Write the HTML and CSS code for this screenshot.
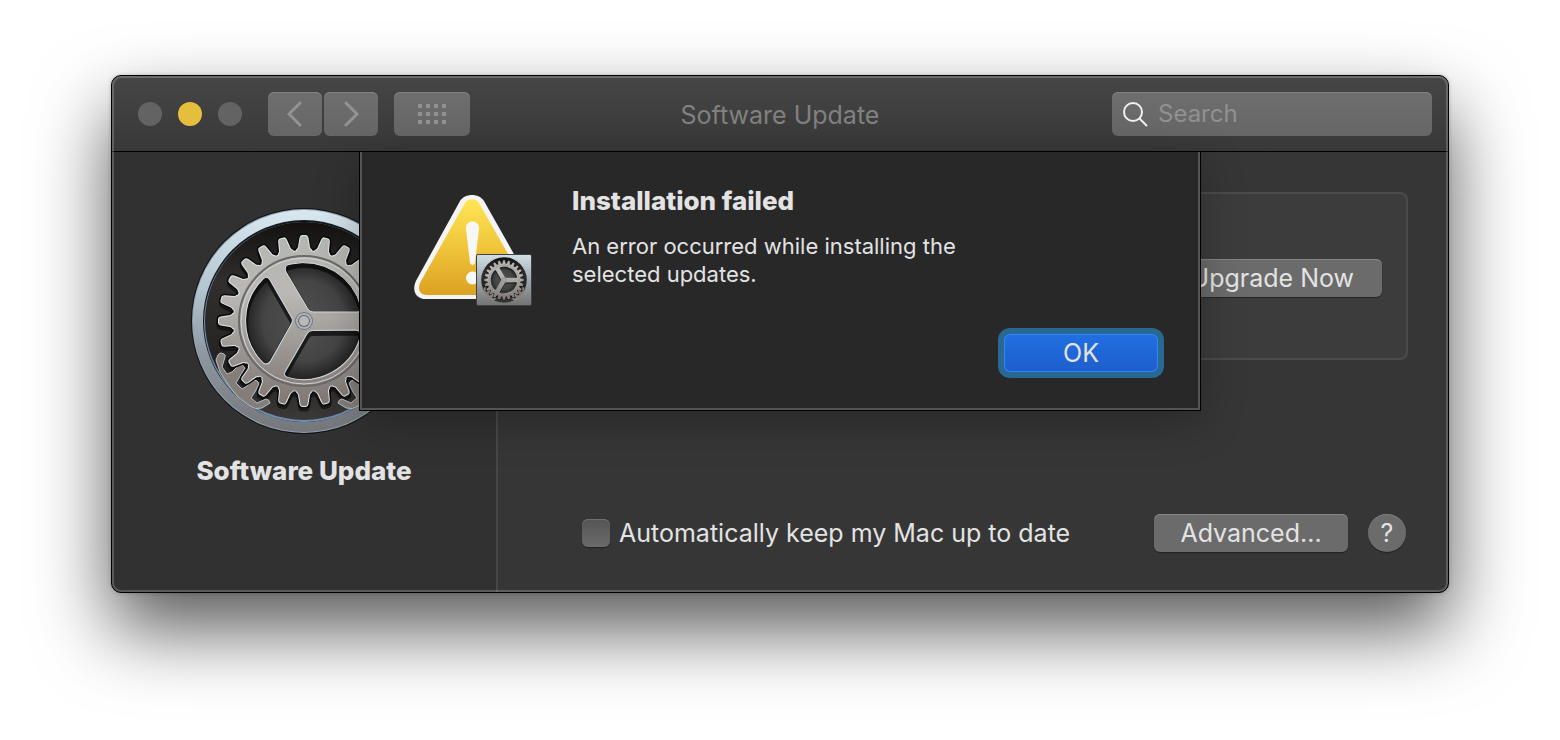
FILE: index.html
```html
<!DOCTYPE html>
<html lang="en">
<head>
<meta charset="utf-8">
<title>Software Update</title>
<link rel="stylesheet" href="styles.css">
</head>
<body>
<svg class="defs" aria-hidden="true">
  <defs>
    <linearGradient id="ringFill" x1="0" y1="0" x2="0" y2="1">
      <stop offset="0" stop-color="#d9e8f0"/><stop offset=".35" stop-color="#b4c6d2"/><stop offset=".65" stop-color="#8e979f"/><stop offset="1" stop-color="#74767a"/>
    </linearGradient>
    <linearGradient id="metal" x1="0" y1="0" x2="0" y2="1">
      <stop offset="0" stop-color="#b3b6b0"/><stop offset=".35" stop-color="#bab8b3"/><stop offset=".65" stop-color="#9c9793"/><stop offset="1" stop-color="#7b736e"/>
    </linearGradient>
    <linearGradient id="edge" gradientUnits="userSpaceOnUse" x1="0" y1="-100" x2="0" y2="100">
      <stop offset="0" stop-color="#e6ece8"/><stop offset=".6" stop-color="#c5d3df"/><stop offset="1" stop-color="#9fb4ca"/>
    </linearGradient>
    <linearGradient id="well" x1="0" y1="0" x2="0" y2="1">
      <stop offset="0" stop-color="#121110"/><stop offset=".3" stop-color="#302f2e"/><stop offset=".75" stop-color="#242221"/><stop offset="1" stop-color="#3c3a38"/>
    </linearGradient>
    <radialGradient id="hollow">
      <stop offset="0" stop-color="#505050"/><stop offset=".65" stop-color="#454545"/><stop offset="1" stop-color="#1b1b1b"/>
    </radialGradient>
    <linearGradient id="warn" x1="0" y1="0" x2="0" y2="1">
      <stop offset="0" stop-color="#ffe654"/><stop offset=".5" stop-color="#efc53a"/><stop offset="1" stop-color="#dca122"/>
    </linearGradient>
    <path id="tooth" d="M-8 -66 L-7 -71 Q-5.500 -72 -5 -74 L-3.500 -83 Q-3 -85 -2 -85 L2 -85 Q3 -85 3.500 -83 L5 -74 Q5.500 -72 7 -71 L8 -66 Z"/>
    <g id="teeth6">
      <use href="#tooth"/><use href="#tooth" transform="rotate(15)"/><use href="#tooth" transform="rotate(30)"/>
      <use href="#tooth" transform="rotate(45)"/><use href="#tooth" transform="rotate(60)"/><use href="#tooth" transform="rotate(75)"/>
    </g>
    <g id="gear">
      <use href="#teeth6"/><use href="#teeth6" transform="rotate(90)"/><use href="#teeth6" transform="rotate(180)"/><use href="#teeth6" transform="rotate(270)"/>
      <circle r="70"/>
    </g>
    <path id="hole" d="M9 -9 L53 -9 Q58 -9 57 -14 A59 59 0 0 0 -13 -57 Q-21 -56 -18 -49 L4 -12 Q6 -9 9 -9 Z"/>
    <g id="holes">
      <use href="#hole"/><use href="#hole" transform="rotate(120)"/><use href="#hole" transform="rotate(240)"/>
    </g>
    <path id="catch" d="M-88 39 L-86 34 Q-85 32 -83 32 L-80 33 Q-78 34 -79 36 L-82 46 L-77 53 L-72 51 L-65 44 Q-61 43 -59 47 L-65 57 L-68 62 L-62 68 L-57 65 L-50 59 Q-46 59 -45 63 L-49 71 L-53 77 L-47 82 L-38 78 Q-35 78 -34 82 L-42 87 Q-49 89 -54 85 L-66 76 Q-75 66 -84 51 Z"/>
    <mask id="gearMask" maskUnits="userSpaceOnUse" x="-100" y="-100" width="200" height="200">
      <use href="#gear" fill="#fff"/><use href="#holes" fill="#000"/>
    </mask>
    <symbol id="wheel" viewBox="-100 -100 200 200" overflow="visible">
      <circle r="99" fill="url(#well)"/>
      <use href="#gear" fill="#0c0b0b" stroke="#0c0b0b" stroke-width="5" opacity=".65" transform="translate(0 3)"/>
      <g fill="#857d77" stroke="#b4bdc5" stroke-width="1">
        <use href="#catch"/><use href="#catch" transform="scale(-1 1)"/>
      </g>
      <use href="#gear" fill="none" stroke="#0c0b0b" stroke-width="5"/>
      <use href="#gear" fill="none" stroke="url(#edge)" stroke-width="2"/>
      <circle r="62" fill="url(#hollow)"/>
      <use href="#holes" fill="none" stroke="#080808" stroke-width="5" opacity=".7" transform="translate(0 3)"/>
      <g mask="url(#gearMask)">
        <rect x="-90" y="-90" width="180" height="180" fill="url(#metal)"/>
        <circle r="65" fill="none" stroke="#6b6a68" stroke-width="2"/>
        <circle r="63" fill="none" stroke="#d3d5d3" stroke-width="1"/>
      </g>
      <use href="#holes" fill="none" stroke="url(#edge)" stroke-width="1"/>
      <circle r="9" fill="#77767a"/><circle r="8" fill="#a8b4bf"/>
      <circle r="6" fill="#63666b"/><circle r="5" fill="#bbb9b6"/>
    </symbol>
  </defs>
</svg>

<main class="window">
  <header class="toolbar">
    <div class="lights">
      <button class="light" aria-label="Close"></button>
      <button class="light light-min" aria-label="Minimize"></button>
      <button class="light" aria-label="Zoom"></button>
    </div>
    <nav class="history">
      <button class="tool" aria-label="Back"><svg width="16" height="26" viewBox="0 0 16 26"><path d="M13 2 L2 13 L13 24"/></svg></button>
      <button class="tool" aria-label="Forward"><svg width="16" height="26" viewBox="0 0 16 26"><path d="M3 2 L14 13 L3 24"/></svg></button>
    </nav>
    <button class="tool tool-grid" aria-label="Show all">
      <svg width="28" height="20" viewBox="0 0 28 20"><path class="dots" d="M0 0h4v4H0zM8 0h4v4H8zM16 0h4v4h-4zM24 0h4v4h-4zM0 8h4v4H0zM8 8h4v4H8zM16 8h4v4h-4zM24 8h4v4h-4zM0 16h4v4H0zM8 16h4v4H8zM16 16h4v4h-4zM24 16h4v4h-4z"/></svg>
    </button>
    <h1 class="title">Software Update</h1>
    <label class="search">
      <svg width="26" height="26" viewBox="0 0 26 26" aria-hidden="true"><circle cx="10" cy="11" r="9"/><path d="M16.500 17.500 L24 25"/></svg>
      <input type="search" placeholder="Search" aria-label="Search">
    </label>
  </header>

  <div class="content">
    <aside class="sidebar">
      <svg class="app-icon" viewBox="-113 -113 226 226" role="img" aria-label="Software Update">
        <circle r="113" fill="#111"/>
        <circle r="112" fill="#8fa2b1"/>
        <circle r="111" fill="url(#ringFill)"/>
        <circle r="101" fill="#15181b"/>
        <circle r="100" cy="1" fill="#6f8db0"/>
        <use href="#wheel" x="-100" y="-100" width="200" height="200"/>
      </svg>
      <h2 class="app-name">Software Update</h2>
    </aside>

    <section class="pane">
      <div class="group">
        <button class="push">Upgrade Now</button>
      </div>
      <div class="options">
        <label class="auto"><input type="checkbox" class="check">Automatically keep my Mac up to date</label>
        <button class="push push-wide">Advanced...</button>
        <button class="help" aria-label="Help">?</button>
      </div>
    </section>

    <div class="sheet" role="alertdialog" aria-labelledby="alert-title" aria-describedby="alert-text">
      <svg class="alert-icon" width="120" height="112" viewBox="0 0 120 112" aria-hidden="true">
        <defs>
          <linearGradient id="plate" x1="0" y1="0" x2="0" y2="1"><stop offset="0" stop-color="#cfdfe6"/><stop offset=".5" stop-color="#a0a8ad"/><stop offset="1" stop-color="#747474"/></linearGradient>
        </defs>
        <path d="M46 6 C51 -2 65 -2 70 6 L114 84 Q122 104 104 104 L12 104 C1 104 -3 94 3 84 Z" fill="#f4f4f4"/>
        <path d="M51 8 C54 3 62 3 65 8 L110 87 Q115 100 104 100 L13 100 C5 100 3 93 7 86 Z" fill="url(#warn)"/>
        <path d="M52 34 C51 24 66 24 65 34 L61 68 Q58.500 72 56 68 Z" fill="#f7f7f7"/>
        <circle cx="58.500" cy="83" r="6.500" fill="#f7f7f7"/>
        <rect x="62" y="59" width="56" height="52" rx="2" fill="#3d4143"/>
        <rect x="63" y="60" width="54" height="50" rx="1" fill="url(#plate)"/>
        <use href="#wheel" x="67" y="62" width="46" height="46"/>
      </svg>
      <div class="alert-body">
        <h2 class="alert-title" id="alert-title">Installation failed</h2>
        <p class="alert-text" id="alert-text">An error occurred while installing the selected updates.</p>
        <button class="ok">OK</button>
      </div>
    </div>
  </div>
</main>
</body>
</html>
```
FILE: styles.css
```css
* { box-sizing: border-box; }

body {
  margin: 0;
  padding: 75px 111px 147px;
  background: #fff;
  color: #e3e3e3;
  font: 25px/32px Inter, "Liberation Sans", sans-serif;
}

h1, h2, p { margin: 0; }

button, input { font: inherit; color: inherit; }

button { border: 0; padding: 0; }

svg { display: block; }

.defs { position: absolute; width: 0; height: 0; }

.window {
  border: 1px solid #000;
  border-radius: 10px;
  background: #363636;
  box-shadow: 0 0 4px rgba(0, 0, 0, .2), 0 36px 76px rgba(0, 0, 0, .66);
  overflow: hidden;
  position: relative;
}

/* light rim just inside the window's edge */
.window::after {
  content: "";
  position: absolute;
  inset: 0;
  border: 2px solid rgba(255, 255, 255, .2);
  border-radius: 9px;
  pointer-events: none;
}

.toolbar {
  display: flex;
  align-items: center;
  height: 76px;
  padding: 0 16px 0 26px;
  background: linear-gradient(#464646, #383838);
  border-bottom: 1px solid #000;
}

.lights { display: flex; gap: 16px; }

.light {
  width: 24px;
  height: 24px;
  border-radius: 50%;
  background: #636363;
}

.light-min { background: #e5bf3c; }

.history { display: flex; gap: 2px; margin: 0 16px 0 26px; }

.tool {
  display: grid;
  place-items: center;
  width: 54px;
  height: 44px;
  border-radius: 6px;
  background: linear-gradient(#6e6e6e, #666);
  box-shadow: inset 0 1px #838383;
}

.tool-grid { width: 76px; }

.tool path { fill: none; stroke: #939393; stroke-width: 3; stroke-linecap: round; }

.tool .dots { fill: #919191; stroke: none; }

.title {
  flex: 1;
  padding: 2px 22px 0 0;
  text-align: center;
  font-size: 25px;
  font-weight: 400;
  color: #818181;
}

.search {
  display: flex;
  align-items: center;
  gap: 9px;
  width: 320px;
  height: 44px;
  padding-left: 11px;
  border-radius: 6px;
  background: linear-gradient(#6e6e6e, #666);
  box-shadow: inset 0 1px #838383;
}

.search svg { fill: none; stroke: #f0f0f0; stroke-width: 2; flex: none; }

.search input {
  flex: 1;
  min-width: 0;
  border: 0;
  padding: 0;
  background: none;
  outline: none;
  font-size: 24px;
}

.search input::placeholder { color: #919191; opacity: 1; }

.content { display: flex; position: relative; }

.sidebar {
  flex: none;
  width: 386px;
  padding: 56px 0 105px;
  background: #313131;
  border-right: 2px solid #474747;
  text-align: center;
}

.app-icon { width: 226px; margin: 0 auto; }

.app-name { margin-top: 21px; font-size: 26px; font-weight: 800; }

.pane {
  flex: 1;
  display: flex;
  flex-direction: column;
  justify-content: space-between;
  padding: 40px 40px 40px;
}

.group {
  display: flex;
  align-items: center;
  justify-content: flex-end;
  height: 168px;
  padding: 4px 24px 0;
  border: 2px solid #4b4b4b;
  border-radius: 8px;
  background: #3c3c3c;
}

.push {
  height: 38px;
  padding: 0 28px;
  border-radius: 6px;
  background: #6b6b6b;
  box-shadow: inset 0 1px #858585, 0 1px 1px rgba(0, 0, 0, .4);
}

.push-wide { min-width: 194px; padding: 0; }

.options { display: flex; align-items: center; padding: 0 2px 0 44px; }

.auto { display: flex; align-items: center; gap: 9px; margin-right: auto; }

.check {
  appearance: none;
  width: 28px;
  height: 28px;
  margin: 0;
  border-radius: 6px;
  background: linear-gradient(#545454, #6b6b6b);
  box-shadow: inset 0 1px #707070, 0 1px 1px rgba(0, 0, 0, .4);
}

.help {
  width: 38px;
  height: 38px;
  margin-left: 20px;
  border-radius: 50%;
  background: #6b6b6b;
  box-shadow: inset 0 1px #7c7c7c, 0 1px 1px rgba(0, 0, 0, .4);
}

.sheet {
  position: absolute;
  top: 0;
  left: 50%;
  transform: translateX(-50%);
  display: flex;
  gap: 38px;
  width: 842px;
  padding: 33px 36px 35px 54px;
  border: 1px solid #000;
  border-top: 0;
  background: #282828;
  box-shadow: inset 2px 0 #555, inset -2px -2px #555, 0 10px 40px rgba(0, 0, 0, .25);
}

.alert-icon { flex: none; margin-top: 10px; }

.alert-body { flex: 1; display: flex; flex-direction: column; }

.alert-title { font-size: 26px; font-weight: 800; }

.alert-text { max-width: 400px; margin-top: 15px; font-size: 22px; line-height: 28px; }

.ok {
  align-self: flex-end;
  width: 154px;
  height: 38px;
  margin: 46px 6px 3px 0;
  border-radius: 6px;
  background: linear-gradient(#216fe3, #1d5ecb);
  box-shadow: inset 0 0 0 1px #2f88f5, 0 0 0 6px #296893;
}
```
